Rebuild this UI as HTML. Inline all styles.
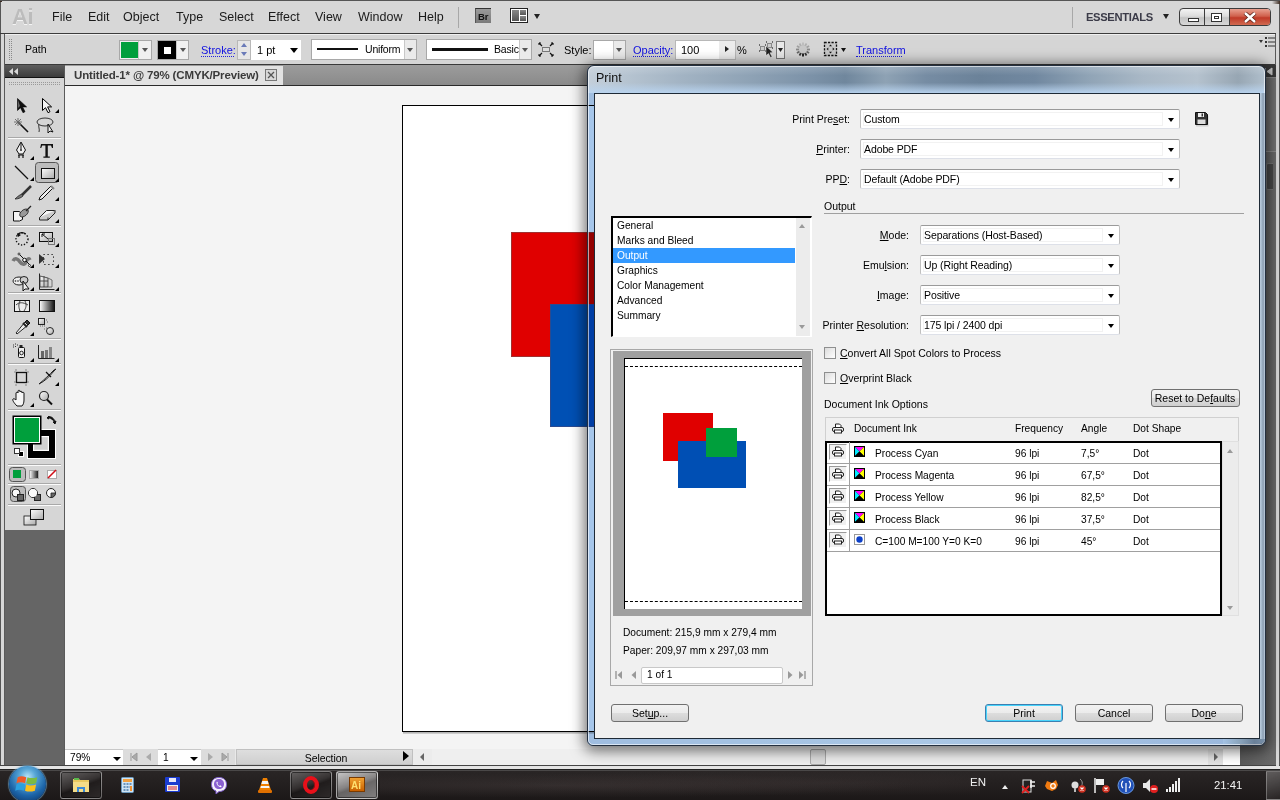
<!DOCTYPE html>
<html><head><meta charset="utf-8"><style>
*{box-sizing:border-box;margin:0;padding:0}
html,body{width:1280px;height:800px;overflow:hidden;background:#d7d7d7;font-family:"Liberation Sans",sans-serif;font-size:11px;color:#000}
.a{position:absolute}
.t{position:absolute;white-space:nowrap;line-height:1}
u{text-decoration:underline;text-underline-offset:1px}
.dd{position:absolute;background:#fff;border:1px solid #c0c0c0;border-top-color:#9a9a9a;border-bottom-color:#dde0e8;border-radius:2px}
.ddi{position:absolute;left:2px;top:2px;bottom:2px;border:1px solid #f2f2f2}
.arr{position:absolute;width:0;height:0;border-left:3.5px solid transparent;border-right:3.5px solid transparent;border-top:4px solid #000}
.cb{position:absolute;width:12px;height:12px;border:1px solid #8e8f8f;background:linear-gradient(135deg,#dcdcdc,#fff)}
.btn{position:absolute;border:1px solid #707070;border-radius:3px;background:linear-gradient(#f2f2f2 0,#ebebeb 50%,#dddddd 51%,#cfcfcf 100%)}
</style></head><body>
<div class="a" style="left:0px;top:0px;width:1px;height:770px;background:#555"></div>
<div class="a" style="left:1279px;top:0px;width:1px;height:770px;background:#555"></div>
<div class="a" style="left:4px;top:33px;width:1272px;height:733px;background:#5a5a5a"></div>
<div class="t" style="left:12px;top:6px;font-size:22px;font-weight:bold;color:#bcbcbc;letter-spacing:-0.5px;text-shadow:0 1px 0 #f4f4f4">Ai</div>
<div class="t" style="left:52px;top:11.4px;font-size:12.5px;color:#1a1a1a;">File</div>
<div class="t" style="left:88px;top:11.4px;font-size:12.5px;color:#1a1a1a;">Edit</div>
<div class="t" style="left:123px;top:11.4px;font-size:12.5px;color:#1a1a1a;">Object</div>
<div class="t" style="left:176px;top:11.4px;font-size:12.5px;color:#1a1a1a;">Type</div>
<div class="t" style="left:219px;top:11.4px;font-size:12.5px;color:#1a1a1a;">Select</div>
<div class="t" style="left:268px;top:11.4px;font-size:12.5px;color:#1a1a1a;">Effect</div>
<div class="t" style="left:315px;top:11.4px;font-size:12.5px;color:#1a1a1a;">View</div>
<div class="t" style="left:358px;top:11.4px;font-size:12.5px;color:#1a1a1a;">Window</div>
<div class="t" style="left:418px;top:11.4px;font-size:12.5px;color:#1a1a1a;">Help</div>
<div class="a" style="left:458px;top:7px;width:1px;height:21px;background:#a8a8a8"></div>
<div class="a" style="left:1072px;top:7px;width:1px;height:21px;background:#a8a8a8"></div>
<div class="a" style="left:5px;top:34px;width:1270px;height:31px;background:#d5d5d5;border-top:1px solid #f0f0f0"></div>
<div class="t" style="left:25px;top:44.1px;font-size:10.5px;">Path</div>
<div class="a" style="left:5px;top:65px;width:59px;height:12px;background:linear-gradient(#5e5e5e,#3c3c3c)"></div>
<div class="a" style="left:5px;top:77px;width:59px;height:1px;background:#111"></div>
<div class="a" style="left:5px;top:78px;width:59px;height:452px;background:#d6d6d6"></div>
<div class="a" style="left:5px;top:530px;width:59px;height:235px;background:#656565"></div>
<div class="a" style="left:65px;top:65px;width:1175px;height:21px;background:linear-gradient(#9c9c9c,#8a8a8a);border-bottom:1px solid #2a2a2a"></div>
<div class="a" style="left:65px;top:66px;width:218px;height:19px;background:#e2e2e2"></div>
<div class="t" style="left:74px;top:70.3px;font-size:11.5px;color:#3a3a3a;font-weight:bold;letter-spacing:-0.15px">Untitled-1* @ 79% (CMYK/Preview)</div>
<div class="a" style="left:65px;top:86px;width:1158px;height:663px;background:#f4f4f4"></div>
<div class="a" style="left:403px;top:732px;width:699px;height:2px;background:linear-gradient(#a8a8a8,#d8d8d8)"></div>
<div class="a" style="left:402px;top:105px;width:700px;height:627px;background:#fff;border:1px solid #000"></div>
<div class="a" style="left:511px;top:232px;width:83px;height:125px;background:#e00000;border:1px solid #a03030;border-right:none"></div>
<div class="a" style="left:550px;top:304px;width:44px;height:123px;background:#0050b4;border:1px solid #2a4a90;border-right:none"></div>
<div class="a" style="left:1223px;top:86px;width:17px;height:663px;background:#ececec"></div>
<div class="a" style="left:1240px;top:65px;width:36px;height:700px;background:#5c5c5c"></div>
<div class="a" style="left:65px;top:749px;width:1158px;height:16px;background:#e9e9e9"></div>
<div class="a" style="left:1223px;top:749px;width:17px;height:16px;background:#fff"></div>
<div class="a" style="left:0px;top:765px;width:1280px;height:5px;background:#e4e4e4;border-top:1px solid #444"></div>
<div class="a" style="left:0px;top:770px;width:1280px;height:30px;background:linear-gradient(#2a2626,#1c1818)"></div>
<div class="a" style="left:475px;top:8px;width:16px;height:15px;background:linear-gradient(#9a9a9a,#7a7a7a);border-top:1px solid #333;border-left:1px solid #555"></div>
<div class="t" style="left:478px;top:12.0px;font-size:9.5px;color:#111;font-weight:bold">Br</div>
<div class="a" style="left:510px;top:8px;width:18px;height:15px;background:#fff;border:1px solid #222"></div>
<div class="a" style="left:512px;top:10px;width:7px;height:11px;background:linear-gradient(#888,#555)"></div>
<div class="a" style="left:520px;top:10px;width:6px;height:5px;background:linear-gradient(#888,#555)"></div>
<div class="a" style="left:520px;top:16px;width:6px;height:5px;background:linear-gradient(#888,#555)"></div>
<div class="arr" style="left:534px;top:14px;border-left-width:3.5px;border-right-width:3.5px;border-top-width:5px;border-top-color:#222"></div>
<div class="t" style="left:1086px;top:11.5px;font-size:11.2px;color:#3b3b48;font-weight:bold;letter-spacing:-0.35px">ESSENTIALS</div>
<div class="arr" style="left:1163px;top:14px;border-left-width:3.5px;border-right-width:3.5px;border-top-width:5px;border-top-color:#222"></div>
<div class="a" style="left:1179px;top:8px;width:92px;height:18px;border:1px solid #3c3c3c;border-radius:4px;overflow:hidden;background:linear-gradient(#f3f3f3,#dcdcdc 45%,#c4c4c4 55%,#d8d8d8)"><div class="a" style="left:24px;top:0;width:1px;height:16px;background:#3c3c3c"></div><div class="a" style="left:49px;top:0;width:1px;height:16px;background:#3c3c3c"></div><div class="a" style="left:50px;top:0;width:41px;height:16px;background:linear-gradient(#e8a090,#d0604c 45%,#c03a28 55%,#d06a50)"></div><div class="a" style="left:8px;top:9px;width:11px;height:4px;background:#fff;border:1px solid #333"></div><div class="a" style="left:31px;top:4px;width:11px;height:9px;background:#fff;border:1px solid #333"><div class="a" style="left:2px;top:2px;width:5px;height:3px;border:1px solid #333"></div></div><svg class="a" style="left:63px;top:3px" width="14" height="11" viewBox="0 0 14 11"><path d="M2 1l10 9M12 1L2 10" stroke="#5a2018" stroke-width="4"/><path d="M2 1l10 9M12 1L2 10" stroke="#fff" stroke-width="2.4"/></svg></div>
<div class="a" style="left:1272px;top:0px;width:8px;height:4px;background:linear-gradient(90deg,#d7d7d7,#3a2a20)"></div>
<div class="a" style="left:0px;top:0px;width:2px;height:2px;background:#3a2a20"></div>
<div class="a" style="left:0px;top:0px;width:1280px;height:1px;background:#555"></div>
<div class="a" style="left:0px;top:33px;width:1276px;height:1px;background:#3c3c3c"></div>
<svg class="a" style="left:9px;top:39px" width="4" height="22"><defs><pattern id="dp2" width="2" height="2" patternUnits="userSpaceOnUse"><rect width="1" height="1" fill="#8a8a8a"/></pattern></defs><rect width="4" height="22" fill="url(#dp2)"/></svg>
<div class="a" style="left:119px;top:40px;width:33px;height:20px;background:#f0f0f0;border:1px solid #a8a8a8"></div>
<div class="a" style="left:121px;top:42px;width:17px;height:16px;background:#009f3c"></div>
<div class="a" style="left:138px;top:41px;width:1px;height:18px;background:#c8c8c8"></div>
<div class="arr" style="left:142px;top:48px;border-top-color:#555"></div>
<div class="a" style="left:157px;top:40px;width:32px;height:20px;background:#f0f0f0;border:1px solid #a8a8a8"></div>
<div class="a" style="left:158px;top:41px;width:18px;height:18px;background:#000"></div>
<div class="a" style="left:164px;top:47px;width:7px;height:7px;background:#fff"></div>
<div class="a" style="left:176px;top:41px;width:1px;height:18px;background:#c8c8c8"></div>
<div class="arr" style="left:180px;top:48px;border-top-color:#555"></div>
<div class="t" style="left:201px;top:44.7px;font-size:11px;color:#1010e0;">Stroke:</div>
<div class="a" style="left:201px;top:56px;width:33px;height:1px;border-top:1px dotted #2020e0"></div>
<div class="a" style="left:237px;top:40px;width:14px;height:20px;background:#e6e6e6;border:1px solid #b8b8b8"></div>
<div class="arr" style="left:241px;top:43px;border-top:none;border-bottom:4px solid #6a7ab8"></div>
<div class="arr" style="left:241px;top:52px;border-top-color:#6a7ab8"></div>
<div class="a" style="left:251px;top:40px;width:50px;height:20px;background:#fff"></div>
<div class="t" style="left:257px;top:44.7px;font-size:11px;">1 pt</div>
<div class="arr" style="left:290px;top:48px;border-left-width:4px;border-right-width:4px;border-top-width:5px"></div>
<div class="a" style="left:311px;top:39px;width:106px;height:21px;background:#fff;border:1px solid #a8a8a8"></div>
<div class="a" style="left:404px;top:40px;width:12px;height:19px;background:#eaeaea;border-left:1px solid #c8c8c8"></div>
<div class="arr" style="left:407px;top:48px;border-top-color:#555"></div>
<div class="a" style="left:317px;top:48px;width:41px;height:2px;background:#111"></div>
<div class="t" style="left:365px;top:44.1px;font-size:10.5px;letter-spacing:-0.2px">Uniform</div>
<div class="a" style="left:426px;top:39px;width:106px;height:21px;background:#fff;border:1px solid #a8a8a8"></div>
<div class="a" style="left:519px;top:40px;width:12px;height:19px;background:#eaeaea;border-left:1px solid #c8c8c8"></div>
<div class="arr" style="left:522px;top:48px;border-top-color:#555"></div>
<div class="a" style="left:432px;top:48px;width:56px;height:3px;background:#111"></div>
<div class="t" style="left:494px;top:44.1px;font-size:10.5px;letter-spacing:-0.2px">Basic</div>
<svg class="a" style="left:538px;top:42px" width="16" height="15" viewBox="0 0 16 15"><rect x="4.5" y="5.5" width="7" height="4" fill="#ddd" stroke="#777"/><path d="M1 1l3 3M15 1l-3 3M1 14l3-3M15 14l-3-3" stroke="#111" stroke-width="1.2"/><path d="M1 1h2M1 1v2M15 1h-2M15 1v2M1 14h2M1 14v-2M15 14h-2M15 14v-2" stroke="#111"/></svg>
<div class="t" style="left:564px;top:44.7px;font-size:11px;">Style:</div>
<div class="a" style="left:593px;top:40px;width:33px;height:20px;background:#fff;border:1px solid #a8a8a8"></div>
<div class="a" style="left:613px;top:41px;width:12px;height:18px;background:#eaeaea;border-left:1px solid #c8c8c8"></div>
<div class="arr" style="left:616px;top:48px;border-top-color:#555"></div>
<div class="t" style="left:633px;top:44.7px;font-size:11px;color:#1010e0;">Opacity:</div>
<div class="a" style="left:633px;top:56px;width:37px;height:1px;border-top:1px dotted #2020e0"></div>
<div class="a" style="left:675px;top:40px;width:61px;height:20px;background:#fff;border:1px solid #b8b8b8"></div>
<div class="a" style="left:719px;top:41px;width:16px;height:18px;background:#ececec"></div>
<div class="arr" style="left:725px;top:46px;border-top:3.5px solid transparent;border-bottom:3.5px solid transparent;border-left:4px solid #222;border-right:none"></div>
<div class="t" style="left:681px;top:44.7px;font-size:11px;">100</div>
<div class="t" style="left:737px;top:44.7px;font-size:11px;">%</div>
<svg class="a" style="left:755px;top:36px" width="95" height="26" viewBox="0 0 95 26"><rect x="5.5" y="10.5" width="4" height="4" fill="#ccc" stroke="#888"/><rect x="12.5" y="7.5" width="4" height="4" fill="#ccc" stroke="#888"/><path d="M4 9h1M4 15h1M10 9h1M10 15h1M11 6h1M17 6h1M17 12h1" stroke="#000"/><path d="M11 10l7 6.5-3 .3 2 4-1.5.8-2-4-2.5 2z" fill="#222" stroke="#fff" stroke-width="0.4"/><rect x="21.5" y="5.5" width="8" height="17" fill="#e8e8e8" stroke="#777"/><path d="M23 12h5l-2.5 4z" fill="#222"/><g transform="translate(48 13.5)"><rect x="-0.9" y="-7" width="1.8" height="3.5" fill="#bbb" transform="rotate(0)"/><rect x="-0.9" y="-7" width="1.8" height="3.5" fill="#b0b0b0" transform="rotate(30)"/><rect x="-0.9" y="-7" width="1.8" height="3.5" fill="#a0a0a0" transform="rotate(60)"/><rect x="-0.9" y="-7" width="1.8" height="3.5" fill="#888" transform="rotate(90)"/><rect x="-0.9" y="-7" width="1.8" height="3.5" fill="#666" transform="rotate(120)"/><rect x="-0.9" y="-7" width="1.8" height="3.5" fill="#333" transform="rotate(150)"/><rect x="-0.9" y="-7" width="1.8" height="3.5" fill="#111" transform="rotate(180)"/><rect x="-0.9" y="-7" width="1.8" height="3.5" fill="#333" transform="rotate(210)"/><rect x="-0.9" y="-7" width="1.8" height="3.5" fill="#666" transform="rotate(240)"/><rect x="-0.9" y="-7" width="1.8" height="3.5" fill="#888" transform="rotate(270)"/><rect x="-0.9" y="-7" width="1.8" height="3.5" fill="#a0a0a0" transform="rotate(300)"/><rect x="-0.9" y="-7" width="1.8" height="3.5" fill="#b0b0b0" transform="rotate(330)"/><circle r="4" fill="#c8c8c8"/></g><rect x="69.5" y="6.5" width="12" height="13" fill="#c8c8c8" stroke="#111" stroke-width="1.3" stroke-dasharray="2.2 1.3"/><path d="M75.5 8.5l-1.5 1.8h3zM75.5 17.5l-1.5-1.8h3zM71.5 13l1.8-1.5v3zM79.5 13l-1.8-1.5v3z" fill="#111"/><path d="M86 12h5l-2.5 4z" fill="#111"/></svg>
<div class="t" style="left:856px;top:44.7px;font-size:11px;color:#1010e0;">Transform</div>
<div class="a" style="left:856px;top:56px;width:46px;height:1px;border-top:1px dotted #2020e0"></div>
<svg class="a" style="left:1258px;top:36px" width="18" height="12" viewBox="0 0 18 12"><path d="M1 4h4l-2 3z" fill="#333"/><rect x="7" y="1" width="2" height="2" fill="#333"/><rect x="7" y="5" width="2" height="2" fill="#333"/><rect x="7" y="9" width="2" height="2" fill="#333"/><rect x="10" y="1.5" width="7" height="1" fill="#333"/><rect x="10" y="5.5" width="7" height="1" fill="#333"/><rect x="10" y="9.5" width="7" height="1" fill="#333"/></svg>
<div class="a" style="left:5px;top:64px;width:1270px;height:1px;background:#3a3a3a"></div>
<svg class="a" style="left:8px;top:67px" width="12" height="9" viewBox="0 0 12 9"><path d="M1 4.5L5 1v7zM6 4.5L10 1v7z" fill="#d8d8d8"/></svg>
<svg class="a" style="left:9px;top:82px" width="52" height="4"><defs><pattern id="dp" width="2" height="2" patternUnits="userSpaceOnUse"><rect width="1" height="1" fill="#9a9a9a"/></pattern></defs><rect width="52" height="4" fill="url(#dp)"/></svg>
<div class="a" style="left:265px;top:69px;width:12px;height:12px;border:1px solid #777;background:#d8d8d8"></div>
<svg class="a" style="left:265px;top:69px" width="12" height="12" viewBox="0 0 12 12"><path d="M3 3l6 6M9 3l-6 6" stroke="#555" stroke-width="1.3"/></svg>
<div class="a" style="left:65px;top:749px;width:58px;height:16px;background:#fff;border-top:1px solid #c8c8c8"></div>
<div class="t" style="left:70px;top:753.4px;font-size:10.2px;">79%</div>
<div class="arr" style="left:113px;top:757px;border-left-width:4px;border-right-width:4px;border-top-width:4px"></div>
<div class="a" style="left:123px;top:749px;width:35px;height:16px;background:#dcdcdc"></div>
<svg class="a" style="left:128px;top:751px" width="28" height="12" viewBox="0 0 28 12"><path d="M3 2v8M9 2L4 6l5 4z" stroke="#999" fill="#aaa" stroke-width="1"/><path d="M23 2L18 6l5 4z" fill="#aaa"/></svg>
<div class="a" style="left:158px;top:749px;width:43px;height:16px;background:#fff;border-top:1px solid #c8c8c8"></div>
<div class="t" style="left:163px;top:753.4px;font-size:10.2px;">1</div>
<div class="arr" style="left:190px;top:757px;border-left-width:4px;border-right-width:4px;border-top-width:4px"></div>
<div class="a" style="left:201px;top:749px;width:34px;height:16px;background:#dcdcdc"></div>
<svg class="a" style="left:205px;top:751px" width="28" height="12" viewBox="0 0 28 12"><path d="M3 2l5 4-5 4z" fill="#aaa"/><path d="M17 2l5 4-5 4zM23 2v8" stroke="#999" fill="#aaa"/></svg>
<div class="a" style="left:236px;top:749px;width:177px;height:16px;background:linear-gradient(#dedede,#cfcfcf);border:1px solid #c0c0c0"></div>
<div class="t" style="left:176px;width:300px;text-align:center;top:753.1px;font-size:10.5px;letter-spacing:-0.1px">Selection</div>
<div class="arr" style="left:403px;top:751px;border-top:5.5px solid transparent;border-bottom:5.5px solid transparent;border-left:6px solid #000;border-right:none"></div>
<div class="a" style="left:413px;top:749px;width:810px;height:16px;background:#ececec"></div>
<div class="arr" style="left:420px;top:753px;border-top:4px solid transparent;border-bottom:4px solid transparent;border-left:none;border-right:4px solid #666"></div>
<div class="a" style="left:432px;top:749px;width:776px;height:16px;background:#efefef"></div>
<div class="a" style="left:1208px;top:749px;width:15px;height:16px;background:#e3e3e3"></div>
<div class="arr" style="left:1214px;top:753px;border-top:4px solid transparent;border-bottom:4px solid transparent;border-right:none;border-left:4px solid #666"></div>
<div class="a" style="left:810px;top:749px;width:16px;height:16px;background:#ddd;border:1px solid #aaa;border-radius:2px"></div>
<div class="a" style="left:1240px;top:65px;width:36px;height:12px;background:#3a3a3a"></div>
<div class="a" style="left:1240px;top:77px;width:36px;height:74px;background:linear-gradient(90deg,#5e5e5e,#737373);border-top:1px solid #888"></div>
<div class="a" style="left:1240px;top:151px;width:36px;height:1px;background:#8a8a8a"></div>
<div class="a" style="left:1240px;top:152px;width:36px;height:613px;background:linear-gradient(90deg,#5a5a5a,#6a6a6a)"></div>
<div class="a" style="left:1266px;top:163px;width:7px;height:27px;background:#4a4a4a;border:1px solid #777;border-right:none;border-radius:2px 0 0 2px"></div>
<div class="a" style="left:1268px;top:81px;width:3px;height:3px;background:radial-gradient(circle,#aaa 0.5px,transparent 0.7px) 0 0/2px 2px"></div>
<div class="a" style="left:1268px;top:156px;width:3px;height:3px;background:radial-gradient(circle,#aaa 0.5px,transparent 0.7px) 0 0/2px 2px"></div>
<div class="a" style="left:1276px;top:33px;width:3px;height:733px;background:#d8d8d8"></div>
<svg class="a" style="left:1264px;top:67px" width="10" height="9" viewBox="0 0 10 9"><path d="M1 1v7M8 1L3 4.5 8 8z" fill="#ccc" stroke="#ccc"/></svg>
<svg class="a" style="left:0;top:0" width="64" height="530" viewBox="0 0 64 530"><defs><linearGradient id="gr1" x1="0" y1="0" x2="1" y2="1"><stop offset="0" stop-color="#fff"/><stop offset="1" stop-color="#aaa"/></linearGradient><linearGradient id="gr2" x1="0" y1="0" x2="1" y2="0"><stop offset="0" stop-color="#fff"/><stop offset="1" stop-color="#111"/></linearGradient></defs><rect x="8" y="137" width="53" height="1" fill="#a9a9a9"/><rect x="8" y="138" width="53" height="1" fill="#fbfbfb"/><rect x="8" y="225" width="53" height="1" fill="#a9a9a9"/><rect x="8" y="226" width="53" height="1" fill="#fbfbfb"/><rect x="8" y="292" width="53" height="1" fill="#a9a9a9"/><rect x="8" y="293" width="53" height="1" fill="#fbfbfb"/><rect x="8" y="338" width="53" height="1" fill="#a9a9a9"/><rect x="8" y="339" width="53" height="1" fill="#fbfbfb"/><rect x="8" y="363" width="53" height="1" fill="#a9a9a9"/><rect x="8" y="364" width="53" height="1" fill="#fbfbfb"/><rect x="8" y="409" width="53" height="1" fill="#a9a9a9"/><rect x="8" y="410" width="53" height="1" fill="#fbfbfb"/><rect x="8" y="464" width="53" height="1" fill="#a9a9a9"/><rect x="8" y="465" width="53" height="1" fill="#fbfbfb"/><rect x="8" y="483" width="53" height="1" fill="#a9a9a9"/><rect x="8" y="484" width="53" height="1" fill="#fbfbfb"/><rect x="8" y="504" width="53" height="1" fill="#a9a9a9"/><rect x="8" y="505" width="53" height="1" fill="#fbfbfb"/><path d="M17.5 98.5v12l3-2.8 2.5 5 2-1-2.4-4.8h4z" fill="#111" stroke="#000" stroke-width="0.6"/><path d="M18 100v8l2-2z" fill="#666"/><path d="M42.5 98.5v12l3-2.8 2.5 5 2-1-2.4-4.8h4z" fill="#f4f4f4" stroke="#000" stroke-width="1"/><path d="M55 113h4v-4z" fill="#000"/><path d="M18 122l10 10" stroke="#111" stroke-width="1.6"/><path d="M14 122h8M18 118v8M15 119l6 6M21 119l-6 6" stroke="#666" stroke-width="0.9"/><ellipse cx="45" cy="122" rx="8" ry="4" fill="none" stroke="#333" stroke-width="1"/><path d="M39 124c-1 3 1 5 0 8" stroke="#333" fill="none"/><path d="M48 124v9l2-2 3 1z" fill="#f0f0f0" stroke="#111"/><path d="M21 142l-4.5 8 2.5 4h4l2.5-4z" fill="#f0f0f0" stroke="#111" stroke-width="1"/><path d="M21 143v6" stroke="#111"/><circle cx="21" cy="150" r="0.9" fill="#111"/><path d="M19 155v3M23 155v3M18 155h6" stroke="#111" stroke-width="1.2"/><path d="M30 160h4v-4z" fill="#000"/><path d="M41 144h12v4h-1l-1-2.5h-3.2v11h2v1.2h-6.4v-1.2h2v-11h-3.2l-1 2.5h-1z" fill="#111"/><path d="M55 160h4v-4z" fill="#000"/><path d="M15 166l13 13" stroke="#111" stroke-width="1.2"/><path d="M30 181h4v-4z" fill="#000"/><rect x="35.5" y="162.5" width="23" height="20" rx="3" fill="#bdbdbd" stroke="#555" stroke-width="1"/><rect x="41.5" y="168.5" width="13" height="10" fill="url(#gr1)" stroke="#111" stroke-width="1"/><path d="M55 182h4v-4z" fill="#000"/><path d="M31 186l-9 9" stroke="#333" stroke-width="2.5"/><path d="M22 194c-3 1-6 4-7 5 3 0 6-1 8-3z" fill="#777" stroke="#222" stroke-width="0.8"/><path d="M53 188l-11 11-3 1 1-3 11-11z" fill="#eee" stroke="#111" stroke-width="1"/><path d="M51 186l3 3" stroke="#888" stroke-width="2"/><path d="M55 201h4v-4z" fill="#000"/><path d="M13.5 211.5h6l3 4v4l-3 1.5h-6z" fill="#f4f4f4" stroke="#111" stroke-width="1"/><ellipse cx="24" cy="213" rx="5" ry="3" transform="rotate(-40 24 213)" fill="#999" stroke="#222" stroke-width="0.8"/><path d="M26 211l5-5" stroke="#222" stroke-width="1.2"/><path d="M39.5 217.5l7-7h8.5l-7 7z" fill="#f6f6f6" stroke="#222"/><path d="M39.5 217.5v2.5h8.5l7-7v-2.5M48 217.5v2.5" fill="#ccc" stroke="#222"/><path d="M55 223h4v-4z" fill="#000"/><circle cx="22" cy="239" r="6" fill="none" stroke="#111" stroke-width="1.4" stroke-dasharray="1.3 1.7"/><path d="M17 233l1 4 3-2z" fill="#111"/><path d="M17.5 235c2-3 6-3 8-1" stroke="#111" stroke-width="1.2" fill="none"/><path d="M30 247h4v-4z" fill="#000"/><rect x="39.5" y="232.5" width="13" height="9" fill="url(#gr1)" stroke="#111"/><rect x="48.5" y="238.5" width="6" height="6" fill="none" stroke="#777"/><path d="M42 234l6 5M42 234h3M42 234v3" stroke="#111" stroke-width="1"/><path d="M55 247h4v-4z" fill="#000"/><path d="M13 261c2-4 5-2 7 1s5 3 6 0c1-3 3-4 4-2" stroke="#777" stroke-width="3.5" fill="none"/><path d="M19 254l11 11" stroke="#111" stroke-width="1"/><circle cx="24.5" cy="260" r="1.8" fill="#fff" stroke="#111"/><circle cx="19" cy="254" r="1" fill="#fff" stroke="#111" stroke-width="0.8"/><circle cx="29.5" cy="265.5" r="1" fill="#fff" stroke="#111" stroke-width="0.8"/><path d="M30 268h4v-4z" fill="#000"/><rect x="43.5" y="254.5" width="10" height="10" fill="none" stroke="#111" stroke-dasharray="1.2 2.8"/><path d="M39 254v10l6-5z" fill="#333"/><path d="M55 268h4v-4z" fill="#000"/><ellipse cx="19" cy="281" rx="6" ry="4" fill="#eee" stroke="#222"/><ellipse cx="24" cy="280" rx="4" ry="3.5" fill="#ccc" stroke="#222"/><circle cx="15.5" cy="281" r="0.8" fill="#222"/><circle cx="18" cy="281" r="0.8" fill="#222"/><path d="M23 281v10l2-2 4 0z" fill="#f0f0f0" stroke="#111"/><path d="M30 291h4v-4z" fill="#000"/><path d="M39.5 273.5v16h15" fill="none" stroke="#222"/><path d="M40 276l8 2v9h-8zM40 281h8M44 276v11" fill="url(#gr1)" stroke="#333" stroke-width="0.8"/><path d="M48 278l4 2v7h-4" fill="none" stroke="#555" stroke-width="0.8"/><path d="M55 291h4v-4z" fill="#000"/><rect x="14.5" y="300.5" width="15" height="11" fill="#eee" stroke="#111"/><path d="M16 305c3-3 7-3 12 0M20 301c-2 4-1 7 0 10M25 301c2 4 1 7-1 10" stroke="#333" fill="none" stroke-width="0.9"/><rect x="39.5" y="300.5" width="15" height="11" fill="url(#gr2)" stroke="#111"/><path d="M27 320l3 3-2 2-3-3z" fill="#333" stroke="#111"/><path d="M25 322l-9 11 1 1 11-9z" fill="#eee" stroke="#111" stroke-width="0.9"/><path d="M23 323l4 4" stroke="#222" stroke-width="2"/><path d="M30 336h4v-4z" fill="#000"/><rect x="38.5" y="318.5" width="6" height="6" fill="url(#gr1)" stroke="#222"/><circle cx="50" cy="331" r="3.5" fill="url(#gr1)" stroke="#222"/><path d="M46 320h1M47 322h1M40 326h1M42 326h1M44 326h1M46 328h1M44 329h1" stroke="#666"/><rect x="18.5" y="347.5" width="6" height="10" rx="1" fill="#eee" stroke="#111"/><rect x="19.5" y="345" width="3" height="2" fill="#222"/><circle cx="21.5" cy="353" r="1.8" fill="none" stroke="#222"/><path d="M13 345h1M15 344h1M17 345h1M13 347h1M15 346.5h1" stroke="#333"/><path d="M30 362h4v-4z" fill="#000"/><path d="M38.5 345v13.5h16" fill="none" stroke="#222"/><rect x="41" y="351" width="3" height="7" fill="#666"/><rect x="45" y="350" width="3" height="8" fill="#777"/><rect x="49" y="347" width="3" height="11" fill="#888"/><path d="M55 362h4v-4z" fill="#000"/><rect x="16.5" y="372.5" width="10" height="10" fill="none" stroke="#111" stroke-width="1.3"/><path d="M14 372h2M27 372h2M14 382h2M27 382h2M16 369v2M26 369v2M16 384v2M26 384v2" stroke="#888"/><path d="M39 384c6-3 10-7 15-13l2-2-2 1c-5 5-9 9-15 14z" fill="#ddd" stroke="#222"/><path d="M46 372l5 5" stroke="#111" stroke-width="1.2"/><path d="M55 386h4v-4z" fill="#000"/><path d="M17 406c-3-3-5-6-4-7 1-1 3 1 3 1v-7c0-1 2-1 2 0v-2c0-1 2-1 2 0v1c0-1 2-1 2 0v1c0-1 2-1 2 0v7c0 3-1 5-2 6z" fill="#f6f6f6" stroke="#111"/><path d="M30 407h4v-4z" fill="#000"/><circle cx="44" cy="396" r="4.5" fill="url(#gr1)" stroke="#222" stroke-width="1.2"/><path d="M47 399.5l5 5" stroke="#111" stroke-width="2"/><rect x="27.5" y="429.5" width="28" height="29" fill="#000" stroke="#fff"/><rect x="33.5" y="436.5" width="15" height="14" fill="#d9d9d9" stroke="#fff"/><rect x="35" y="438" width="12" height="11" fill="#d0d0d0"/><rect x="12.5" y="415.5" width="29" height="29" fill="#000"/><rect x="14" y="417" width="26" height="26" fill="#fff"/><rect x="15" y="418" width="24" height="24" fill="#009f3c"/><path d="M48 417c3-1 6 1 7 5M47 418l2-2v3zM55 424l1-3-3 1z" stroke="#111" fill="#111" stroke-width="1"/><rect x="18.5" y="451.5" width="5" height="5" fill="#000" stroke="#fff"/><rect x="14.5" y="448.5" width="5" height="5" fill="#fff" stroke="#333"/><rect x="9.5" y="467.5" width="16" height="14" rx="3" fill="#bcbcbc" stroke="#555"/><rect x="13" y="470" width="8" height="8" fill="#009f3c"/><rect x="29.5" y="470.5" width="9" height="8" fill="url(#gr2)" stroke="#aaa"/><rect x="47.5" y="470.5" width="9" height="8" fill="#fff" stroke="#aaa"/><path d="M48 478l8-8" stroke="#d0101a" stroke-width="1.6"/><rect x="10.5" y="486.5" width="15" height="15" rx="3" fill="#bcbcbc" stroke="#555"/><circle cx="16" cy="493" r="4" fill="#fafafa" stroke="#222"/><rect x="17.5" y="494.5" width="6" height="6" fill="#666" stroke="#222"/><circle cx="33" cy="493" r="4.5" fill="#fafafa" stroke="#222"/><rect x="34.5" y="494.5" width="6" height="6" fill="#666" stroke="#222"/><circle cx="33" cy="493" r="4" fill="#fafafa"/><circle cx="51" cy="493" r="4.5" fill="#fafafa" stroke="#222"/><path d="M51 493h4.5a4.5 4.5 0 0 1-4.5 4.5z" fill="#666" stroke="#222" stroke-width="0.8"/><rect x="24" y="516" width="12" height="9" fill="url(#gr1)" stroke="#111" stroke-width="0.8"/><rect x="30.5" y="509.5" width="13" height="10" fill="url(#gr1)" stroke="#111"/></svg>
<div class="a" style="left:0px;top:769px;width:1280px;height:1px;background:#202020"></div>
<div class="a" style="left:0px;top:770px;width:1280px;height:1px;background:#4a4848"></div>
<div class="a" style="left:380px;top:771px;width:600px;height:29px;background:radial-gradient(ellipse at 30% 50%,rgba(80,70,70,0.35),transparent 60%),radial-gradient(ellipse at 75% 40%,rgba(70,60,60,0.3),transparent 55%)"></div>
<div class="a" style="left:9px;top:766px;width:37px;height:36px;border-radius:50%;background:radial-gradient(circle at 50% 30%,#b8e4f8 0,#5aa8d8 25%,#1c64a8 60%,#0a2a58 100%);box-shadow:0 0 1px 1px rgba(120,180,220,0.6)"></div>
<svg class="a" style="left:14px;top:771px" width="27" height="27" viewBox="0 0 22 22"><path d="M3 5c2-1 4-1 7 0l-1 5c-2-1-5-1-7 0z" fill="#f05a28"/><path d="M11 5c2 1 5 1 8 0l-1 5c-3 1-6 1-8 0z" fill="#7cbb42"/><path d="M2 11c2-1 5-1 7 0l-1 5c-2-1-5-1-7 0z" fill="#2aa0e0"/><path d="M10 11c2 1 5 1 8 0l-1 5c-3 1-6 1-8 0z" fill="#fcc01a"/></svg>
<div class="a" style="left:60px;top:771px;width:42px;height:28px;border-radius:3px;border:1px solid rgba(255,255,255,0.35);box-shadow:inset 0 0 0 1px rgba(0,0,0,0.5);background:linear-gradient(160deg,rgba(255,255,255,0.28),rgba(255,255,255,0.08) 45%,rgba(0,0,0,0.1) 55%,rgba(255,255,255,0.08))"></div>
<div class="a" style="left:290px;top:771px;width:42px;height:28px;border-radius:3px;border:1px solid rgba(255,255,255,0.35);box-shadow:inset 0 0 0 1px rgba(0,0,0,0.5);background:linear-gradient(160deg,rgba(255,255,255,0.28),rgba(255,255,255,0.08) 45%,rgba(0,0,0,0.1) 55%,rgba(255,255,255,0.08))"></div>
<div class="a" style="left:336px;top:771px;width:42px;height:28px;border-radius:3px;border:1px solid rgba(255,255,255,0.35);box-shadow:inset 0 0 0 1px rgba(0,0,0,0.5);background:linear-gradient(160deg,rgba(255,255,255,0.75),rgba(255,255,255,0.45) 45%,rgba(255,255,255,0.32) 55%,rgba(255,255,255,0.45))"></div>
<svg class="a" style="left:72px;top:777px" width="18" height="16" viewBox="0 0 18 16"><path d="M1 2h6l1 1h9v12H1z" fill="#e8c860"/><rect x="2" y="1" width="5" height="2" fill="#5cb84c"/><rect x="1" y="5" width="16" height="10" fill="#f4dc88"/><path d="M5 15v-5h8v5h-2v-3h-4v3z" fill="#3a8ad8"/></svg>
<svg class="a" style="left:121px;top:777px" width="13" height="16" viewBox="0 0 13 16"><rect x="0.5" y="0.5" width="12" height="15" rx="1" fill="#cfe4f4" stroke="#6a9ac0"/><rect x="2" y="2" width="9" height="3" fill="#f0a040"/><path d="M2.5 7h2M5.5 7h2M8.5 7h2M2.5 10h2M5.5 10h2M8.5 10h2M2.5 13h2M5.5 13h2" stroke="#4a7aa8" stroke-width="1.5"/><rect x="9" y="9" width="2" height="5" fill="#f09030"/></svg>
<svg class="a" style="left:165px;top:777px" width="15" height="15" viewBox="0 0 15 15"><rect x="0" y="0" width="15" height="15" rx="1" fill="#1c3cd0"/><rect x="4" y="1" width="7" height="4" fill="#e8e8f8"/><rect x="2" y="8" width="11" height="6" fill="#f0f0f0"/><path d="M3 10h9M3 12h9" stroke="#d02030"/></svg>
<svg class="a" style="left:211px;top:777px" width="16" height="17" viewBox="0 0 16 17"><path d="M8 0.5c4.5 0 7.5 2.5 7.5 7s-3 7-7.5 7l-3 2.5v-3C2 13 0.5 11 0.5 7.5 0.5 3 3.5 0.5 8 0.5z" fill="#f4f0fa" stroke="#7a58c8"/><path d="M3 7c0-3 2-5 5-5s5 2 5 5-2 5-5 5-5-2-5-5z" fill="#8a60d0"/><path d="M6 4.5l1 1.5-.7.8c.4 1 1 1.7 2 2.1l.8-.7 1.5 1-.5 1c-2.5 0-4.6-2.2-4.6-4.7z" fill="#fff"/></svg>
<svg class="a" style="left:258px;top:777px" width="14" height="16" viewBox="0 0 14 16"><path d="M5 1h4l4 12H1z" fill="#f08000"/><path d="M4.2 4h5.6l.8 3H3.4zM3 9h8l.6 2H2.4z" fill="#f4f4f4"/><rect x="0" y="13" width="14" height="3" rx="1" fill="#e07000"/></svg>
<div class="a" style="left:303px;top:776px;width:16px;height:18px;border-radius:50%;border:4px solid #e8101a;box-shadow:inset -1px 0 0 #901010"></div>
<div class="a" style="left:349px;top:777px;width:16px;height:15px;background:linear-gradient(#f0a030,#c86000);border:1px solid #7a3a00"></div>
<div class="t" style="left:351px;top:780.5px;font-size:10px;color:#ffe070;font-weight:bold">Ai</div>
<div class="t" style="left:970px;top:777.3px;font-size:11.5px;color:#f0f0f0;">EN</div>
<div class="arr" style="left:1002px;top:785px;border-top:none;border-bottom:4px solid #eee"></div>
<svg class="a" style="left:1020px;top:777px" width="170" height="17" viewBox="0 0 170 17"><rect x="3" y="3" width="8" height="12" fill="#222" stroke="#ddd" stroke-width="1"/><path d="M10 5h5M10 9h5M11 3v8" stroke="#eee" stroke-width="1.5"/><path d="M2 9l7 7M9 9l-7 7" stroke="#e02020" stroke-width="1.8"/><path d="M27 4l5 2 4-3 2 5-2 4-4 2-5-2-2-3z" fill="#f07a10"/><circle cx="33" cy="9" r="2.3" fill="none" stroke="#fff" stroke-width="1.2"/><circle cx="55" cy="8" r="3.5" fill="#ddd"/><rect x="54" y="11" width="2" height="4" fill="#bbb"/><path d="M60 2c3 2 3 6 0 9" stroke="#999" fill="none"/><circle cx="62" cy="12" r="3.8" fill="#d03020"/><path d="M60.5 10.5l3 3M63.5 10.5l-3 3" stroke="#fff" stroke-width="1.2"/><path d="M75 1v15" stroke="#eee" stroke-width="1.5"/><path d="M76 2h8v6h-8z" fill="#eee"/><circle cx="86" cy="12" r="3.8" fill="#d03020"/><path d="M84.5 10.5l3 3M87.5 10.5l-3 3" stroke="#fff" stroke-width="1.2"/><circle cx="106" cy="8.5" r="8" fill="#2050b8" stroke="#6a9ae0"/><path d="M106 6v9M103 4c-2 2-2 5 0 7M109 4c2 2 2 5 0 7" stroke="#fff" stroke-width="1.2" fill="none"/><path d="M123 6h3l4-4v13l-4-4h-3z" fill="#e8e8e8"/><circle cx="134" cy="12" r="4" fill="#e02020"/><path d="M131.5 12h5" stroke="#fff" stroke-width="1.5"/><rect x="146" y="12" width="2" height="3" fill="#eee"/><rect x="149" y="10" width="2" height="5" fill="#eee"/><rect x="152" y="7" width="2" height="8" fill="#eee"/><rect x="155" y="4" width="2" height="11" fill="#eee"/><rect x="158" y="1" width="2" height="14" fill="#eee"/></svg>
<div class="t" style="left:1214px;top:780.4px;font-size:11.3px;color:#f4f4f4;">21:41</div>
<div class="a" style="left:1266px;top:771px;width:14px;height:29px;border:1px solid rgba(255,255,255,0.3);border-right:none;background:linear-gradient(160deg,rgba(255,255,255,0.25),rgba(255,255,255,0.05))"></div>
<div class="a" style="left:587px;top:65px;width:679px;height:681px;border-radius:7px 7px 6px 6px;box-shadow:0 2px 14px 3px rgba(0,0,0,0.55)"></div>
<div class="a" style="left:587px;top:65px;width:679px;height:681px;border-radius:7px 7px 6px 6px;background:linear-gradient(90deg,#a6c6ea,#b2d0f0 50%,#a0c0e6);mix-blend-mode:multiply"></div>
<div class="a" style="left:588px;top:66px;width:677px;height:27px;border-radius:6px 6px 0 0;background:linear-gradient(rgba(255,255,255,0.18),rgba(255,255,255,0) 35%,rgba(0,0,0,0) 62%,rgba(185,212,240,0.95) 100%),linear-gradient(90deg,#c4cfda 0,#b5c3d0 6%,#a2b3c3 14%,#8ea2b5 24%,#7c92a8 33%,#70879d 38%,#8ea2b4 44%,#768ca3 50%,#6b8299 58%,#7188a0 66%,#90a4b6 74%,#a9b8c6 82%,#b5c2ce 90%,#97a6b3 96%,#b0bfcc 100%)"></div>
<div class="a" style="left:587px;top:65px;width:679px;height:681px;border-radius:7px 7px 6px 6px;border:1px solid #243040"><div class="a" style="left:0;top:0;right:0;bottom:0;border-radius:6px 6px 5px 5px;border:1px solid rgba(255,255,255,0.6)"></div></div>
<div class="a" style="left:1259px;top:93px;width:6px;height:646px;background:linear-gradient(90deg,#c8d8e8,#a8bccf 40%,#8a9cb0 70%,#c0d0e0)"></div>
<div class="a" style="left:1223px;top:739px;width:42px;height:5px;border-bottom-right-radius:5px;background:linear-gradient(90deg,#a3c2e4,#8aa4bc 40%,#6a8098 75%,#7890a8)"></div>
<div class="t" style="left:596px;top:72.4px;font-size:12.5px;color:#111;">Print</div>
<div class="a" style="left:594px;top:93px;width:666px;height:646px;background:#f0f0f0;border:1px solid #1e2a36"></div>
<div class="t" style="right:430px;top:114.1px;font-size:10.5px;">Print Pre<u>s</u>et:</div>
<div class="dd" style="left:860px;top:109px;width:320px;height:20px"><div class="ddi" style="width:300px"></div><div class="arr" style="left:307px;top:8px"></div></div>
<div class="t" style="left:864px;top:114.1px;font-size:10.5px;letter-spacing:-0.1px">Custom</div>
<div class="t" style="right:430px;top:144.1px;font-size:10.5px;"><u>P</u>rinter:</div>
<div class="dd" style="left:860px;top:139px;width:320px;height:20px"><div class="ddi" style="width:300px"></div><div class="arr" style="left:307px;top:8px"></div></div>
<div class="t" style="left:864px;top:144.1px;font-size:10.5px;letter-spacing:-0.1px">Adobe PDF</div>
<div class="t" style="right:430px;top:174.1px;font-size:10.5px;">PP<u>D</u>:</div>
<div class="dd" style="left:860px;top:169px;width:320px;height:20px"><div class="ddi" style="width:300px"></div><div class="arr" style="left:307px;top:8px"></div></div>
<div class="t" style="left:864px;top:174.1px;font-size:10.5px;letter-spacing:-0.1px">Default (Adobe PDF)</div>
<div class="t" style="left:824px;top:201.1px;font-size:10.5px;">Output</div>
<div class="a" style="left:824px;top:213px;width:420px;height:1px;background:#a0a0a0"></div>
<div class="t" style="right:371px;top:230.1px;font-size:10.5px;"><u>M</u>ode:</div>
<div class="dd" style="left:920px;top:225px;width:200px;height:20px"><div class="ddi" style="width:180px"></div><div class="arr" style="left:187px;top:8px"></div></div>
<div class="t" style="left:924px;top:230.1px;font-size:10.5px;letter-spacing:-0.1px">Separations (Host-Based)</div>
<div class="t" style="right:371px;top:260.1px;font-size:10.5px;">Emu<u>l</u>sion:</div>
<div class="dd" style="left:920px;top:255px;width:200px;height:20px"><div class="ddi" style="width:180px"></div><div class="arr" style="left:187px;top:8px"></div></div>
<div class="t" style="left:924px;top:260.1px;font-size:10.5px;letter-spacing:-0.1px">Up (Right Reading)</div>
<div class="t" style="right:371px;top:290.1px;font-size:10.5px;"><u>I</u>mage:</div>
<div class="dd" style="left:920px;top:285px;width:200px;height:20px"><div class="ddi" style="width:180px"></div><div class="arr" style="left:187px;top:8px"></div></div>
<div class="t" style="left:924px;top:290.1px;font-size:10.5px;letter-spacing:-0.1px">Positive</div>
<div class="t" style="right:371px;top:320.1px;font-size:10.5px;">Printer <u>R</u>esolution:</div>
<div class="dd" style="left:920px;top:315px;width:200px;height:20px"><div class="ddi" style="width:180px"></div><div class="arr" style="left:187px;top:8px"></div></div>
<div class="t" style="left:924px;top:320.1px;font-size:10.5px;letter-spacing:-0.1px">175 lpi / 2400 dpi</div>
<div class="cb" style="left:824px;top:347px"></div>
<div class="t" style="left:840px;top:348.1px;font-size:10.5px;"><u>C</u>onvert All Spot Colors to Process</div>
<div class="cb" style="left:824px;top:372px"></div>
<div class="t" style="left:840px;top:373.1px;font-size:10.5px;"><u>O</u>verprint Black</div>
<div class="t" style="left:824px;top:399.1px;font-size:10.5px;">Document Ink Options</div>
<div class="btn" style="left:1151px;top:389px;width:89px;height:18px"></div>
<div class="t" style="left:1045px;width:300px;text-align:center;top:393.1px;font-size:10.5px;">Reset to De<u>f</u>aults</div>
<div class="a" style="left:825px;top:417px;width:414px;height:24px;background:#f0f0f0;border:1px solid #d0d0d0;border-bottom:none"></div>
<div class="t" style="left:854px;top:424.4px;font-size:10.2px;">Document Ink</div>
<div class="t" style="left:1015px;top:424.4px;font-size:10.2px;">Frequency</div>
<div class="t" style="left:1081px;top:424.4px;font-size:10.2px;">Angle</div>
<div class="t" style="left:1133px;top:424.4px;font-size:10.2px;">Dot Shape</div>
<div class="a" style="left:825px;top:441px;width:397px;height:175px;background:#fff;border:2px solid #000;border-right-width:2px"></div>
<div class="a" style="left:1222px;top:441px;width:17px;height:175px;background:#ececec;border:1px solid #e0e0e0"></div>
<div class="a" style="left:827px;top:463px;width:393px;height:1px;background:#a0a0a0"></div>
<div class="a" style="left:849px;top:442px;width:1px;height:21px;background:#a0a0a0"></div>
<div class="t" style="left:875px;top:449.4px;font-size:10.2px;">Process Cyan</div>
<div class="t" style="left:1015px;top:449.4px;font-size:10.2px;">96 lpi</div>
<div class="t" style="left:1081px;top:449.4px;font-size:10.2px;">7,5°</div>
<div class="t" style="left:1133px;top:449.4px;font-size:10.2px;">Dot</div>
<div class="a" style="left:827px;top:485px;width:393px;height:1px;background:#a0a0a0"></div>
<div class="a" style="left:849px;top:464px;width:1px;height:21px;background:#a0a0a0"></div>
<div class="t" style="left:875px;top:471.4px;font-size:10.2px;">Process Magenta</div>
<div class="t" style="left:1015px;top:471.4px;font-size:10.2px;">96 lpi</div>
<div class="t" style="left:1081px;top:471.4px;font-size:10.2px;">67,5°</div>
<div class="t" style="left:1133px;top:471.4px;font-size:10.2px;">Dot</div>
<div class="a" style="left:827px;top:507px;width:393px;height:1px;background:#a0a0a0"></div>
<div class="a" style="left:849px;top:486px;width:1px;height:21px;background:#a0a0a0"></div>
<div class="t" style="left:875px;top:493.4px;font-size:10.2px;">Process Yellow</div>
<div class="t" style="left:1015px;top:493.4px;font-size:10.2px;">96 lpi</div>
<div class="t" style="left:1081px;top:493.4px;font-size:10.2px;">82,5°</div>
<div class="t" style="left:1133px;top:493.4px;font-size:10.2px;">Dot</div>
<div class="a" style="left:827px;top:529px;width:393px;height:1px;background:#a0a0a0"></div>
<div class="a" style="left:849px;top:508px;width:1px;height:21px;background:#a0a0a0"></div>
<div class="t" style="left:875px;top:515.4px;font-size:10.2px;">Process Black</div>
<div class="t" style="left:1015px;top:515.4px;font-size:10.2px;">96 lpi</div>
<div class="t" style="left:1081px;top:515.4px;font-size:10.2px;">37,5°</div>
<div class="t" style="left:1133px;top:515.4px;font-size:10.2px;">Dot</div>
<div class="a" style="left:827px;top:551px;width:393px;height:1px;background:#a0a0a0"></div>
<div class="a" style="left:849px;top:530px;width:1px;height:21px;background:#a0a0a0"></div>
<div class="t" style="left:875px;top:537.4px;font-size:10.2px;">C=100 M=100 Y=0 K=0</div>
<div class="t" style="left:1015px;top:537.4px;font-size:10.2px;">96 lpi</div>
<div class="t" style="left:1081px;top:537.4px;font-size:10.2px;">45°</div>
<div class="t" style="left:1133px;top:537.4px;font-size:10.2px;">Dot</div>
<div class="a" style="left:611px;top:216px;width:201px;height:121px;background:#fff;border:1px solid #fff;border-top:2px solid #000;border-left:2px solid #000"></div>
<div class="a" style="left:796px;top:218px;width:14px;height:118px;background:#ececec"></div>
<div class="a" style="left:613px;top:248px;width:182px;height:15px;background:#3399ff"></div>
<div class="t" style="left:617px;top:221.4px;font-size:10.2px;color:#000;">General</div>
<div class="t" style="left:617px;top:236.4px;font-size:10.2px;color:#000;">Marks and Bleed</div>
<div class="t" style="left:617px;top:251.4px;font-size:10.2px;color:#fff;">Output</div>
<div class="t" style="left:617px;top:266.4px;font-size:10.2px;color:#000;">Graphics</div>
<div class="t" style="left:617px;top:281.4px;font-size:10.2px;color:#000;">Color Management</div>
<div class="t" style="left:617px;top:296.4px;font-size:10.2px;color:#000;">Advanced</div>
<div class="t" style="left:617px;top:311.4px;font-size:10.2px;color:#000;">Summary</div>
<div class="a" style="left:610px;top:349px;width:203px;height:337px;border:1px solid #a8a8a8;background:#f0f0f0"></div>
<div class="a" style="left:613px;top:351px;width:198px;height:265px;background:#a0a0a0"></div>
<div class="a" style="left:624px;top:358px;width:178px;height:251px;background:#fff;border-left:1px solid #000;border-top:1px solid #000"></div>
<div class="a" style="left:625px;top:366px;width:177px;height:1px;border-top:1px dashed #000"></div>
<div class="a" style="left:625px;top:601px;width:177px;height:1px;border-top:1px dashed #000"></div>
<div class="a" style="left:663px;top:413px;width:50px;height:48px;background:#e00000"></div>
<div class="a" style="left:678px;top:441px;width:68px;height:47px;background:#004fb4"></div>
<div class="a" style="left:706px;top:428px;width:31px;height:29px;background:#009f3c"></div>
<div class="t" style="left:623px;top:628.4px;font-size:10.2px;">Document: 215,9 mm x 279,4 mm</div>
<div class="t" style="left:623px;top:646.4px;font-size:10.2px;">Paper: 209,97 mm x 297,03 mm</div>
<div class="a" style="left:641px;top:667px;width:142px;height:17px;background:#fff;border:1px solid #c8c8c8;border-radius:2px"></div>
<div class="t" style="left:647px;top:670.4px;font-size:10.2px;">1 of 1</div>
<svg class="a" style="left:1194px;top:111px" width="16" height="16" viewBox="0 0 16 16"><path d="M2 2.5h10l2.5 2.5v10.5h-12.5z" fill="#bbb" opacity="0.6"/><path d="M1.5 1.5h10l2 2v10h-12z" fill="#333" stroke="#111"/><rect x="4" y="2" width="6" height="4" fill="#eee"/><rect x="7.5" y="2.5" width="1.5" height="3" fill="#333"/><rect x="3.5" y="8.5" width="8" height="4.5" fill="#ddd"/></svg>
<div class="arr" style="left:799px;top:224px;border-top:none;border-bottom:4px solid #9a9a9a"></div>
<div class="arr" style="left:799px;top:325px;border-top-color:#9a9a9a"></div>
<div class="arr" style="left:1227px;top:449px;border-top:none;border-bottom:4px solid #9a9a9a"></div>
<div class="arr" style="left:1227px;top:606px;border-top-color:#9a9a9a"></div>
<svg class="a" style="left:832px;top:423px" width="12" height="11" viewBox="0 0 12 11"><path d="M3.5 4.5v-3.5h4l1.5 1.5v2" fill="#fff" stroke="#222"/><rect x="0.5" y="4.5" width="11" height="4" rx="1.5" fill="#f4f4f4" stroke="#222"/><rect x="2.5" y="7" width="7" height="3" fill="#fff" stroke="#222"/></svg>
<div class="a" style="left:829px;top:444px;width:18px;height:16px;background:#f0f0f0;border:1px solid #fff;border-top-color:#9a9a9a;border-left-color:#9a9a9a"></div>
<svg class="a" style="left:832px;top:446px" width="12" height="11" viewBox="0 0 12 11"><path d="M3.5 4.5v-3.5h4l1.5 1.5v2" fill="#fff" stroke="#222"/><rect x="0.5" y="4.5" width="11" height="4" rx="1.5" fill="#f4f4f4" stroke="#222"/><rect x="2.5" y="7" width="7" height="3" fill="#fff" stroke="#222"/></svg>
<svg class="a" style="left:854px;top:446px" width="11" height="11" viewBox="0 0 11 11"><rect width="11" height="11" fill="#000"/><path d="M1 1h9L5.5 5.5z" fill="#ff00ff"/><path d="M1 1v9L5.5 5.5z" fill="#00e8ff"/><path d="M10 1v9L5.5 5.5z" fill="#ffff00"/><path d="M1 10h9L5.5 5.5z" fill="#000"/></svg>
<div class="a" style="left:829px;top:466px;width:18px;height:16px;background:#f0f0f0;border:1px solid #fff;border-top-color:#9a9a9a;border-left-color:#9a9a9a"></div>
<svg class="a" style="left:832px;top:468px" width="12" height="11" viewBox="0 0 12 11"><path d="M3.5 4.5v-3.5h4l1.5 1.5v2" fill="#fff" stroke="#222"/><rect x="0.5" y="4.5" width="11" height="4" rx="1.5" fill="#f4f4f4" stroke="#222"/><rect x="2.5" y="7" width="7" height="3" fill="#fff" stroke="#222"/></svg>
<svg class="a" style="left:854px;top:468px" width="11" height="11" viewBox="0 0 11 11"><rect width="11" height="11" fill="#000"/><path d="M1 1h9L5.5 5.5z" fill="#ff00ff"/><path d="M1 1v9L5.5 5.5z" fill="#00e8ff"/><path d="M10 1v9L5.5 5.5z" fill="#ffff00"/><path d="M1 10h9L5.5 5.5z" fill="#000"/></svg>
<div class="a" style="left:829px;top:488px;width:18px;height:16px;background:#f0f0f0;border:1px solid #fff;border-top-color:#9a9a9a;border-left-color:#9a9a9a"></div>
<svg class="a" style="left:832px;top:490px" width="12" height="11" viewBox="0 0 12 11"><path d="M3.5 4.5v-3.5h4l1.5 1.5v2" fill="#fff" stroke="#222"/><rect x="0.5" y="4.5" width="11" height="4" rx="1.5" fill="#f4f4f4" stroke="#222"/><rect x="2.5" y="7" width="7" height="3" fill="#fff" stroke="#222"/></svg>
<svg class="a" style="left:854px;top:490px" width="11" height="11" viewBox="0 0 11 11"><rect width="11" height="11" fill="#000"/><path d="M1 1h9L5.5 5.5z" fill="#ff00ff"/><path d="M1 1v9L5.5 5.5z" fill="#00e8ff"/><path d="M10 1v9L5.5 5.5z" fill="#ffff00"/><path d="M1 10h9L5.5 5.5z" fill="#000"/></svg>
<div class="a" style="left:829px;top:510px;width:18px;height:16px;background:#f0f0f0;border:1px solid #fff;border-top-color:#9a9a9a;border-left-color:#9a9a9a"></div>
<svg class="a" style="left:832px;top:512px" width="12" height="11" viewBox="0 0 12 11"><path d="M3.5 4.5v-3.5h4l1.5 1.5v2" fill="#fff" stroke="#222"/><rect x="0.5" y="4.5" width="11" height="4" rx="1.5" fill="#f4f4f4" stroke="#222"/><rect x="2.5" y="7" width="7" height="3" fill="#fff" stroke="#222"/></svg>
<svg class="a" style="left:854px;top:512px" width="11" height="11" viewBox="0 0 11 11"><rect width="11" height="11" fill="#000"/><path d="M1 1h9L5.5 5.5z" fill="#ff00ff"/><path d="M1 1v9L5.5 5.5z" fill="#00e8ff"/><path d="M10 1v9L5.5 5.5z" fill="#ffff00"/><path d="M1 10h9L5.5 5.5z" fill="#000"/></svg>
<div class="a" style="left:829px;top:532px;width:18px;height:16px;background:#f0f0f0;border:1px solid #fff;border-top-color:#9a9a9a;border-left-color:#9a9a9a"></div>
<svg class="a" style="left:832px;top:534px" width="12" height="11" viewBox="0 0 12 11"><path d="M3.5 4.5v-3.5h4l1.5 1.5v2" fill="#fff" stroke="#222"/><rect x="0.5" y="4.5" width="11" height="4" rx="1.5" fill="#f4f4f4" stroke="#222"/><rect x="2.5" y="7" width="7" height="3" fill="#fff" stroke="#222"/></svg>
<svg class="a" style="left:854px;top:534px" width="11" height="11" viewBox="0 0 11 11"><rect x="0.5" y="0.5" width="10" height="10" fill="#fff" stroke="#999"/><circle cx="5.5" cy="5.5" r="3.2" fill="#0d40c8"/></svg>
<svg class="a" style="left:614px;top:669px" width="196" height="12" viewBox="0 0 196 12"><path d="M2 2v8" stroke="#888" stroke-width="1.2"/><path d="M8 2L3.5 6 8 10z" fill="#999"/><path d="M22 2L17.5 6 22 10z" fill="#999"/><path d="M174 2l4.5 4-4.5 4z" fill="#999"/><path d="M185 2l4.5 4-4.5 4z" fill="#999"/><path d="M191 2v8" stroke="#888" stroke-width="1.2"/></svg>
<div class="btn" style="left:611px;top:704px;width:78px;height:18px"></div>
<div class="t" style="left:500px;width:300px;text-align:center;top:708.1px;font-size:10.5px;">Set<u>u</u>p...</div>
<div class="btn" style="left:985px;top:704px;width:78px;height:18px;border-color:#3c7fb1;box-shadow:inset 0 0 0 1px #48d4fb"></div>
<div class="t" style="left:874px;width:300px;text-align:center;top:708.1px;font-size:10.5px;">Print</div>
<div class="btn" style="left:1075px;top:704px;width:78px;height:18px"></div>
<div class="t" style="left:964px;width:300px;text-align:center;top:708.1px;font-size:10.5px;">Cancel</div>
<div class="btn" style="left:1165px;top:704px;width:78px;height:18px"></div>
<div class="t" style="left:1054px;width:300px;text-align:center;top:708.1px;font-size:10.5px;">Do<u>n</u>e</div>
</body></html>
